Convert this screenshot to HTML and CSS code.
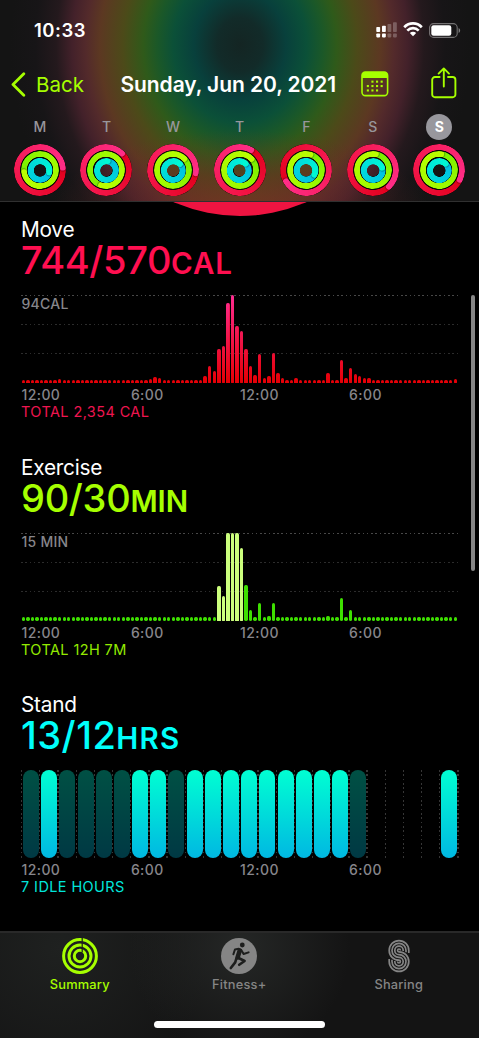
FILE: index.html
```
<!DOCTYPE html>
<html lang="en">
<head>
  <meta charset="UTF-8">
  <title>Activity</title>
  <link rel="stylesheet" href="styles.css">
</head>
<body>
  <div class="phone">

    <header class="header">
      <div class="status-bar">
        <span class="time">10:33</span>
        <div class="status-icons">
          <svg class="signal" width="21" height="16" viewBox="0 0 21 16" fill="#fff">
            <rect x="0.3" y="5" width="3.8" height="5" rx="0.8"/>
            <rect x="6" y="3.8" width="3.8" height="6.2" rx="0.8"/>
            <rect x="11.5" y="2" width="3.8" height="8" rx="0.8" opacity="0.25"/>
            <rect x="17" y="0.3" width="3.8" height="9.7" rx="0.8" opacity="0.25"/>
            <rect x="0.3" y="11.4" width="3.8" height="4" rx="0.8"/>
            <rect x="6" y="11.4" width="3.8" height="4" rx="0.8"/>
            <rect x="11.5" y="11.4" width="3.8" height="4" rx="0.8" opacity="0.25"/>
            <rect x="17" y="11.4" width="3.8" height="4" rx="0.8" opacity="0.25"/>
          </svg>
          <svg class="wifi" width="20" height="15" viewBox="0 0 20 15" fill="none" stroke="#fff" stroke-width="2.7">
            <path d="M1.2 5.2C6.2 0.2 13.8 0.2 18.8 5.2"/>
            <path d="M4.3 8.6C7.5 5.4 12.5 5.4 15.7 8.6"/>
            <path d="M10 14.2L6.8 11C8.6 9.2 11.4 9.2 13.2 11Z" fill="#fff" stroke="none"/>
          </svg>
          <svg class="battery" width="32" height="15" viewBox="0 0 32 15">
            <rect x="0.6" y="0.6" width="27.6" height="13.8" rx="4" fill="none" stroke="#fff" stroke-opacity="0.4" stroke-width="1.1"/>
            <rect x="2.3" y="2.3" width="20" height="10.4" rx="2.2" fill="#fff"/>
            <path d="M29.6 5V10C31.6 9.2 31.6 5.8 29.6 5Z" fill="#fff" fill-opacity="0.45"/>
          </svg>
        </div>
      </div>

      <div class="nav-bar">
        <a class="back">
          <svg width="15" height="25" viewBox="0 0 15 25" fill="none" stroke="#a6ff00" stroke-width="2.8" stroke-linecap="round" stroke-linejoin="round">
            <path d="M12.8 1.8L2 12.5L12.8 23.2"/>
          </svg>
          <span>Back</span>
        </a>
        <h1 class="date">Sunday, Jun 20, 2021</h1>
        <svg class="calendar" width="28" height="26" viewBox="0 0 28 26">
          <rect x="1" y="1" width="25.6" height="23.6" rx="3.4" fill="none" stroke="#a6ff00" stroke-width="1.6"/>
          <path d="M1 7V4.4A3.4 3.4 0 0 1 4.4 1H23.2A3.4 3.4 0 0 1 26.6 4.4V7Z" fill="#a6ff00"/>
          <g fill="#a6ff00">
            <rect x="10.4" y="9.6" width="2.1" height="2.1"/><rect x="15" y="9.6" width="2.1" height="2.1"/><rect x="19.6" y="9.6" width="2.1" height="2.1"/>
            <rect x="5.8" y="14" width="2.1" height="2.1"/><rect x="10.4" y="14" width="2.1" height="2.1"/><rect x="15" y="14" width="2.1" height="2.1"/><rect x="19.6" y="14" width="2.1" height="2.1"/>
            <rect x="5.8" y="18.4" width="2.1" height="2.1"/><rect x="10.4" y="18.4" width="2.1" height="2.1"/><rect x="15" y="18.4" width="2.1" height="2.1"/>
          </g>
        </svg>
        <svg class="share" width="26" height="32" viewBox="0 0 26 32" fill="none" stroke="#a6ff00" stroke-width="1.9" stroke-linecap="round" stroke-linejoin="round">
          <path d="M8.6 10H4A2.8 2.8 0 0 0 1.2 12.8V27.4A2.8 2.8 0 0 0 4 30.2H21.6A2.8 2.8 0 0 0 24.4 27.4V12.8A2.8 2.8 0 0 0 21.6 10H17"/>
          <path d="M12.8 19.6V1.6M7.6 6.6L12.8 1.4L18 6.6"/>
        </svg>
      </div>

      <div class="week" id="week"></div>
    </header>

    <main class="content">
      <div class="big-ring"></div>

      <section class="metric move">
        <h2>Move</h2>
        <p class="value">744/570<span class="unit">CAL</span></p>
        <div class="chart">
          <span class="scale">94CAL</span>
          <div class="bars" id="moveBars"></div>
        </div>
        <div class="axis"><span>12:00</span><span>6:00</span><span>12:00</span><span>6:00</span></div>
        <p class="total">TOTAL 2,354 CAL</p>
      </section>

      <section class="metric exercise">
        <h2>Exercise</h2>
        <p class="value">90/30<span class="unit">MIN</span></p>
        <div class="chart">
          <span class="scale">15 MIN</span>
          <div class="bars" id="exerciseBars"></div>
        </div>
        <div class="axis"><span>12:00</span><span>6:00</span><span>12:00</span><span>6:00</span></div>
        <p class="total">TOTAL 12H 7M</p>
      </section>

      <section class="metric stand">
        <h2>Stand</h2>
        <p class="value">13/12<span class="unit">HRS</span></p>
        <div class="hours" id="standHours"></div>
        <div class="axis"><span>12:00</span><span>6:00</span><span>12:00</span><span>6:00</span></div>
        <p class="total">7 IDLE HOURS</p>
      </section>

      <div class="scrollbar"></div>
    </main>

    <footer class="tab-bar">
      <nav class="tabs">
        <a class="tab active">
          <svg width="36" height="36" viewBox="0 0 36 36" fill="none" stroke="#a6ff00" stroke-width="3">
            <circle cx="18" cy="18" r="16.4"/>
            <circle cx="18" cy="18" r="11"/>
            <circle cx="18" cy="18" r="5.7"/>
            <path d="M20.2 0V14.5" stroke="#1b1c1b" stroke-width="1.2"/>
          </svg>
          <span>Summary</span>
        </a>
        <a class="tab">
          <svg width="36" height="36" viewBox="0 0 36 36">
            <circle cx="18" cy="18" r="18" fill="#858585"/>
            <g fill="none" stroke="#1d1e1d" stroke-linecap="round" stroke-linejoin="round">
              <circle cx="21.3" cy="7" r="2.4" fill="#1d1e1d" stroke="none"/>
              <path d="M18.8 12.4L16.6 19.4" stroke-width="4.6"/>
              <path d="M17.6 10.8L14 11.4L12.4 16.2" stroke-width="2"/>
              <path d="M20.4 12.2L22.6 16L27.6 14.4" stroke-width="2"/>
              <path d="M17.6 20L23.6 23L18.2 26.8" stroke-width="2.6"/>
              <path d="M15.4 20.4L14.2 24.4L9.8 30" stroke-width="2.6"/>
            </g>
          </svg>
          <span>Fitness+</span>
        </a>
        <a class="tab">
          <svg width="36" height="36" viewBox="0 0 36 36" fill="none" stroke="#858585" stroke-width="1.7">
            <path d="M27.8 15V12.4A9.8 9.8 0 0 0 8.2 12.4A9.8 9.8 0 0 0 18 22.2A1.4 1.4 0 0 1 19.4 23.6A1.4 1.4 0 0 1 16.6 23.6"/>
            <path d="M25 14.2V12.4A7 7 0 0 0 11 12.4A7 7 0 0 0 18 19.4A4.2 4.2 0 0 1 22.2 23.6A4.2 4.2 0 0 1 13.8 23.6V23"/>
            <path d="M22.2 13V12.4A4.2 4.2 0 0 0 13.8 12.4A4.2 4.2 0 0 0 18 16.6A7 7 0 0 1 25 23.6A7 7 0 0 1 11 23.6V21.8"/>
            <path d="M19.4 12.4A1.4 1.4 0 0 0 16.6 12.4A1.4 1.4 0 0 0 18 13.8A9.8 9.8 0 0 1 27.8 23.6A9.8 9.8 0 0 1 8.2 23.6V21"/>
          </svg>
          <span>Sharing</span>
        </a>
      </nav>
      <div class="home-indicator"></div>
    </footer>

  </div>
  <script src="main.js"></script>
</body>
</html>
```

FILE: styles.css
```
* {
  box-sizing: border-box;
}
body {
  margin: 0;
  background: #fff;
  font-family: Inter, "Liberation Sans", sans-serif;
  color: #fff;
}
h1, h2, p {
  margin: 0;
  font-weight: 400;
}
svg {
  display: block;
}
.phone {
  display: flex;
  flex-direction: column;
  width: 479px;
  height: 1038px;
  background: #000;
  overflow: hidden;
}

/* Header */
.header {
  flex: none;
  height: 202px;
  border-bottom: 1px solid #303030;
  background:
    radial-gradient(ellipse 190px 85px at 240px 215px, rgba(125,52,35,0.7), rgba(110,42,38,0.4) 50%, transparent),
    radial-gradient(ellipse 230px 270px at 240px 45px,
      #142523 0, #122b29 10%, #08403c 20%, #0b5038 29%, #1b5828 36%,
      #2f5a1a 42%, #4c4a19 51%, #5c3822 61%, #532a2b 67%,
      #43212a 73%, #24191d 80%, #171517 89%, #141414 100%);
}
.status-bar {
  display: flex;
  justify-content: space-between;
  align-items: center;
  height: 59px;
  padding: 1px 18px 0 34px;
}
.time {
  font-size: 18.5px;
  font-weight: 600;
  letter-spacing: 0.5px;
}
.status-icons {
  display: flex;
  align-items: center;
  gap: 6px;
}
.wifi {
  margin-top: -1px;
}
.nav-bar {
  display: flex;
  align-items: center;
  height: 50px;
  padding: 0 22px 0 11px;
}
.back {
  display: flex;
  align-items: center;
  gap: 10px;
  width: 109.5px;
  color: #a6ff00;
  font-size: 20.5px;
}
.date {
  width: 217px;
  font-size: 21px;
  font-weight: 600;
  letter-spacing: -0.08px;
  white-space: nowrap;
}
.calendar {
  margin-left: 23px;
}
.share {
  margin: -2px 0 0 auto;
}

/* Week row */
.week {
  display: grid;
  grid-template-columns: repeat(7, 66.6px);
  padding-left: 6.6px;
}
.day {
  display: flex;
  flex-direction: column;
  align-items: center;
}
.day-name {
  width: 26px;
  height: 26px;
  margin: 4.6px 0 4.4px;
  border-radius: 50%;
  color: #98969b;
  font-size: 14px;
  font-weight: 500;
  line-height: 26px;
  text-align: center;
}
.day-name.today {
  background: #98979d;
  color: #fff;
  font-weight: 700;
}
.rings {
  display: grid;
  place-items: center;
  width: 52px;
  height: 52px;
  border-radius: 50%;
  background: radial-gradient(circle, transparent 6px, rgba(0,0,0,0.75) 6.5px);
}
.ring {
  grid-area: 1 / 1;
  position: relative;
  border-radius: 50%;
}
.ring.red {
  width: 52px;
  height: 52px;
  background: conic-gradient(#e2001c, #f4164a 45%, #ff2d87);
  mask: radial-gradient(circle, transparent 19.6px, #000 20.2px);
}
.ring.green {
  width: 38px;
  height: 38px;
  background: conic-gradient(#78ef00, #9cfa00 40%, #baff00);
  mask: radial-gradient(circle, transparent 12.9px, #000 13.5px);
}
.ring.cyan {
  width: 24.6px;
  height: 24.6px;
  background: conic-gradient(#00bfe2, #00d8dc 50%, #00f8d4);
  mask: radial-gradient(circle, transparent 5.9px, #000 6.5px);
}
/* rounded end of the ring */
.ring::after {
  content: "";
  position: absolute;
  top: 0;
  left: 50%;
  width: 6px;
  height: 5.8px;
  margin-left: -3px;
  border-radius: 50%;
  box-shadow: 1px 0 1px rgba(0,0,0,0.3);
}
.ring.red::after {
  background: #ff2d87;
}
.ring.green::after {
  background: #baff00;
}
.ring.cyan::after {
  background: #00f8d4;
}

/* Content */
.content {
  position: relative;
  flex: 1;
  overflow: hidden;
  padding: 13px 22px 0 21px;
}
/* bottom of the large ring, scrolled under the header */
.big-ring {
  position: absolute;
  left: 74px;
  top: -318px;
  width: 332px;
  height: 332px;
  border-radius: 50%;
  background: #ee1441;
}
.metric {
  position: relative;
  height: 237.5px;
}
.metric h2 {
  height: 26px;
  font-size: 20.8px;
  line-height: 29px;
  letter-spacing: -0.25px;
}
.value {
  height: 54px;
  font-size: 38px;
  font-weight: 500;
  line-height: 39px;
  white-space: nowrap;
}
.unit {
  font-size: 29.5px;
  font-weight: 600;
}
.move .value {
  color: #ff0f50;
  letter-spacing: -0.35px;
}
.move .unit {
  letter-spacing: 0.8px;
}
.exercise .value {
  color: #a6ff00;
  letter-spacing: -0.3px;
}
.exercise .unit {
  letter-spacing: 0;
}
.stand .value {
  color: #00fffb;
  letter-spacing: 0.5px;
}
.stand .unit {
  letter-spacing: 1.2px;
}

.chart {
  position: relative;
  height: 88px;
}
.chart::before {
  content: "";
  position: absolute;
  inset: 0 -1.5px 0 -0.5px;
  background:
    linear-gradient(#484848, #484848) 0 0 / 100% 1px no-repeat,
    linear-gradient(#2c2c2c, #2c2c2c) 0 29px / 100% 1px no-repeat,
    linear-gradient(#2c2c2c, #2c2c2c) 0 58px / 100% 1px no-repeat;
  mask: repeating-linear-gradient(90deg, #000 0 1.6px, transparent 1.6px 4.27px);
}
.scale {
  position: absolute;
  left: 0.5px;
  top: 0;
  color: #87868b;
  font-size: 14px;
  font-weight: 500;
  line-height: 18px;
  letter-spacing: 0.25px;
}
.bars {
  position: relative;
  display: grid;
  grid-template-columns: repeat(96, 4.55px);
  align-items: end;
  height: 88px;
}
.bar {
  width: 3.4px;
  margin-left: 0.6px;
  border-radius: 1.7px 1.7px 0.5px 0.5px;
}
.move .bar {
  background: #e60008 linear-gradient(#ff2d92, #f0154a 50%, #e60008 97%) bottom / 100% 88px no-repeat;
}
.exercise .bar {
  border-radius: 1.7px;
  background: #3ee000;
}
.exercise .bar.active {
  border-radius: 1.7px 1.7px 0.5px 0.5px;
  background: #ccff7d;
}

/* Stand */
.hours {
  display: grid;
  grid-template-columns: repeat(24, 18.18px);
  height: 88px;
  margin-left: 0.3px;
  position: relative;
}
.hours::before {
  content: "";
  position: absolute;
  inset: 0 -2px 0 0;
  background: repeating-linear-gradient(90deg, #363636 0 1.3px, transparent 1.3px 18.18px);
  mask: repeating-linear-gradient(#000 0 1.6px, transparent 1.6px 4.3px);
}
.hour {
  position: relative;
  width: 16px;
  margin-left: 1.8px;
  border-radius: 8px;
}
.hour.idle {
  background: linear-gradient(#005044, #003944);
}
.hour.stood {
  background: linear-gradient(#00ffd2, #00b8e2);
}

.axis {
  display: grid;
  grid-template-columns: 109.4px 109.2px 109px 1fr;
  height: 19px;
  padding-left: 0.5px;
  color: #87868b;
  font-size: 14px;
  font-weight: 500;
  line-height: 23px;
  letter-spacing: 0.4px;
}
.total {
  font-size: 14.5px;
  line-height: 20px;
  letter-spacing: 0.4px;
}
.move .total {
  color: #ee1550;
}
.exercise .total {
  color: #93ea00;
}
.stand .total {
  color: #00e5dc;
}

.scrollbar {
  position: absolute;
  right: 4px;
  top: 92.5px;
  width: 4px;
  height: 276px;
  border-radius: 2px;
  background: #868686;
}

/* Tab bar */
.tab-bar {
  flex: none;
  height: 107px;
  border-top: 2px solid #292929;
  background: radial-gradient(circle at 240px 15px, #252726, transparent 110px),
    radial-gradient(circle at 60px 15px, #1f2120, transparent 150px), #141414;
}
.tabs {
  display: grid;
  grid-template-columns: repeat(3, 159.5px);
  height: 88px;
  padding-top: 5px;
}
.tab {
  display: flex;
  flex-direction: column;
  align-items: center;
  color: #858585;
  font-size: 12.8px;
  font-weight: 500;
  line-height: 22px;
  letter-spacing: 0.2px;
}
.tab.active {
  color: #a6ff00;
}
.home-indicator {
  width: 171px;
  height: 7px;
  margin: 0 auto;
  border-radius: 4px;
  background: #fff;
}
```

FILE: main.js
```
// head angle of each ring in degrees: red, green, cyan
const week = [
  { name: 'M', heads: [84, 262, 105] },
  { name: 'T', heads: [44, 198, 10] },
  { name: 'W', heads: [98, 45, 48] },
  { name: 'T', heads: [29, 46, 45] },
  { name: 'F', heads: [240, 16, 120] },
  { name: 'S', heads: [136, 10, 75] },
  { name: 'S', heads: [115, 8, 45], today: true }
];
const colors = ['red', 'green', 'cyan'];

document.getElementById('week').innerHTML = week.map(day => `
  <div class="day">
    <span class="day-name${day.today ? ' today' : ''}">${day.name}</span>
    <div class="rings">
      ${day.heads.map((deg, i) => `<div class="ring ${colors[i]}" style="transform: rotate(${deg}deg)"></div>`).join('')}
    </div>
  </div>`).join('');

// quarter-hour bars, only the ones above the minimum are listed
const move = {
  8: 4, 28: 4, 29: 6.5, 30: 5, 40: 6.7, 41: 17, 42: 12.5, 43: 34.5, 44: 37, 45: 80, 46: 88,
  47: 56.7, 48: 51.7, 49: 33.7, 50: 17, 51: 8, 52: 29, 53: 5, 54: 7, 55: 30, 56: 10, 57: 5,
  60: 5, 67: 10.5, 70: 23.5, 71: 5.5, 72: 15, 73: 9, 74: 7.5, 75: 5, 76: 5, 95: 4
};
const exercise = {
  43: 34.7, 44: 25, 45: 88, 46: 88, 47: 88, 48: 72.5, 49: 36, 50: 11, 52: 17.3,
  54: 5, 55: 17.3, 67: 5, 70: 23, 72: 11
};

function drawBars(id, data, isActive) {
  let html = '';
  for (let i = 0; i < 96; i++) {
    html += `<div class="bar${isActive(i) ? ' active' : ''}" style="height: ${data[i] || 3.2}px"></div>`;
  }
  document.getElementById(id).innerHTML = html;
}
drawBars('moveBars', move, () => false);
drawBars('exerciseBars', exercise, i => i >= 43 && i <= 48);

// s = stood, i = idle, - = no data
const hours = 'isiiiississsssssssi----s';
const hourClass = { s: 'hour stood', i: 'hour idle', '-': 'hour' };
document.getElementById('standHours').innerHTML =
  [...hours].map(h => `<div class="${hourClass[h]}"></div>`).join('');
```
